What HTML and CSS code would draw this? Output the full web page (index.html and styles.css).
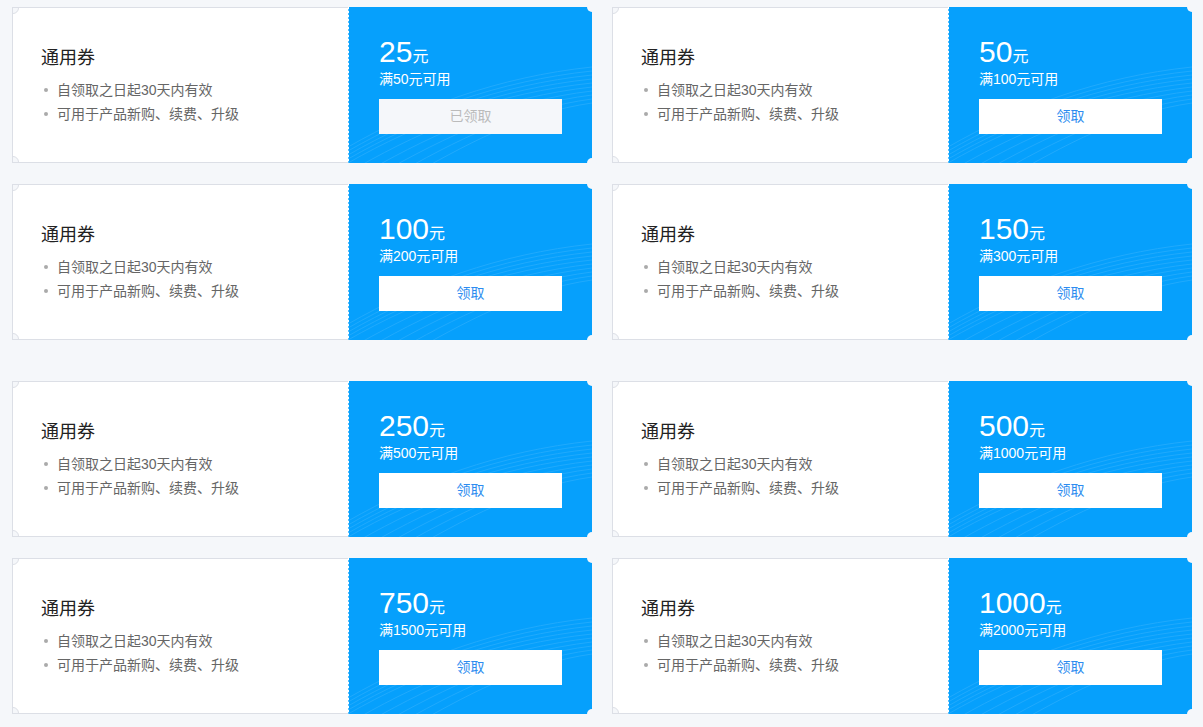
FILE: index.html
```html
<!DOCTYPE html>
<html lang="zh-CN">
<head>
    <meta charset="UTF-8">
    <meta name="viewport" content="width=device-width, initial-scale=1.0">
    <title>优惠券</title>
    <link rel="stylesheet" href="styles.css">
</head>
<body>
    <div class="page">
        <!-- 第一组 -->
        <div class="coupon-group">
            <div class="coupon">
                <div class="coupon-info">
                    <h3>通用券</h3>
                    <ul>
                        <li>自领取之日起30天内有效</li>
                        <li>可用于产品新购、续费、升级</li>
                    </ul>
                </div>
                <div class="coupon-value">
                    <svg class="waves" viewBox="0 0 244 156" preserveAspectRatio="none"><g fill="none" stroke="#fff"><path d="M0 140 C 70 100, 150 70, 244 60"/><path d="M0 144 C 70 104, 150 74, 244 64"/><path d="M0 148 C 70 108, 150 78, 244 68"/><path d="M0 152 C 70 112, 150 82, 244 72"/><path d="M0 156 C 70 116, 150 86, 244 76"/><path d="M10 160 C 80 120, 155 90, 244 80"/><path d="M20 164 C 90 124, 160 94, 244 84"/><path d="M30 168 C 100 128, 165 98, 244 88"/><path d="M40 172 C 110 132, 170 102, 244 92"/><path d="M50 176 C 120 136, 175 106, 244 96"/></g></svg>
                    <div class="amount">25<small>元</small></div>
                    <div class="limit">满50元可用</div>
                    <button class="btn disabled">已领取</button>
                </div>
            </div>
            <div class="coupon">
                <div class="coupon-info">
                    <h3>通用券</h3>
                    <ul>
                        <li>自领取之日起30天内有效</li>
                        <li>可用于产品新购、续费、升级</li>
                    </ul>
                </div>
                <div class="coupon-value">
                    <svg class="waves" viewBox="0 0 244 156" preserveAspectRatio="none"><g fill="none" stroke="#fff"><path d="M0 140 C 70 100, 150 70, 244 60"/><path d="M0 144 C 70 104, 150 74, 244 64"/><path d="M0 148 C 70 108, 150 78, 244 68"/><path d="M0 152 C 70 112, 150 82, 244 72"/><path d="M0 156 C 70 116, 150 86, 244 76"/><path d="M10 160 C 80 120, 155 90, 244 80"/><path d="M20 164 C 90 124, 160 94, 244 84"/><path d="M30 168 C 100 128, 165 98, 244 88"/><path d="M40 172 C 110 132, 170 102, 244 92"/><path d="M50 176 C 120 136, 175 106, 244 96"/></g></svg>
                    <div class="amount">50<small>元</small></div>
                    <div class="limit">满100元可用</div>
                    <button class="btn">领取</button>
                </div>
            </div>
            <div class="coupon">
                <div class="coupon-info">
                    <h3>通用券</h3>
                    <ul>
                        <li>自领取之日起30天内有效</li>
                        <li>可用于产品新购、续费、升级</li>
                    </ul>
                </div>
                <div class="coupon-value">
                    <svg class="waves" viewBox="0 0 244 156" preserveAspectRatio="none"><g fill="none" stroke="#fff"><path d="M0 140 C 70 100, 150 70, 244 60"/><path d="M0 144 C 70 104, 150 74, 244 64"/><path d="M0 148 C 70 108, 150 78, 244 68"/><path d="M0 152 C 70 112, 150 82, 244 72"/><path d="M0 156 C 70 116, 150 86, 244 76"/><path d="M10 160 C 80 120, 155 90, 244 80"/><path d="M20 164 C 90 124, 160 94, 244 84"/><path d="M30 168 C 100 128, 165 98, 244 88"/><path d="M40 172 C 110 132, 170 102, 244 92"/><path d="M50 176 C 120 136, 175 106, 244 96"/></g></svg>
                    <div class="amount">100<small>元</small></div>
                    <div class="limit">满200元可用</div>
                    <button class="btn">领取</button>
                </div>
            </div>
            <div class="coupon">
                <div class="coupon-info">
                    <h3>通用券</h3>
                    <ul>
                        <li>自领取之日起30天内有效</li>
                        <li>可用于产品新购、续费、升级</li>
                    </ul>
                </div>
                <div class="coupon-value">
                    <svg class="waves" viewBox="0 0 244 156" preserveAspectRatio="none"><g fill="none" stroke="#fff"><path d="M0 140 C 70 100, 150 70, 244 60"/><path d="M0 144 C 70 104, 150 74, 244 64"/><path d="M0 148 C 70 108, 150 78, 244 68"/><path d="M0 152 C 70 112, 150 82, 244 72"/><path d="M0 156 C 70 116, 150 86, 244 76"/><path d="M10 160 C 80 120, 155 90, 244 80"/><path d="M20 164 C 90 124, 160 94, 244 84"/><path d="M30 168 C 100 128, 165 98, 244 88"/><path d="M40 172 C 110 132, 170 102, 244 92"/><path d="M50 176 C 120 136, 175 106, 244 96"/></g></svg>
                    <div class="amount">150<small>元</small></div>
                    <div class="limit">满300元可用</div>
                    <button class="btn">领取</button>
                </div>
            </div>
        </div>

        <!-- 第二组 -->
        <div class="coupon-group">
            <div class="coupon">
                <div class="coupon-info">
                    <h3>通用券</h3>
                    <ul>
                        <li>自领取之日起30天内有效</li>
                        <li>可用于产品新购、续费、升级</li>
                    </ul>
                </div>
                <div class="coupon-value">
                    <svg class="waves" viewBox="0 0 244 156" preserveAspectRatio="none"><g fill="none" stroke="#fff"><path d="M0 140 C 70 100, 150 70, 244 60"/><path d="M0 144 C 70 104, 150 74, 244 64"/><path d="M0 148 C 70 108, 150 78, 244 68"/><path d="M0 152 C 70 112, 150 82, 244 72"/><path d="M0 156 C 70 116, 150 86, 244 76"/><path d="M10 160 C 80 120, 155 90, 244 80"/><path d="M20 164 C 90 124, 160 94, 244 84"/><path d="M30 168 C 100 128, 165 98, 244 88"/><path d="M40 172 C 110 132, 170 102, 244 92"/><path d="M50 176 C 120 136, 175 106, 244 96"/></g></svg>
                    <div class="amount">250<small>元</small></div>
                    <div class="limit">满500元可用</div>
                    <button class="btn">领取</button>
                </div>
            </div>
            <div class="coupon">
                <div class="coupon-info">
                    <h3>通用券</h3>
                    <ul>
                        <li>自领取之日起30天内有效</li>
                        <li>可用于产品新购、续费、升级</li>
                    </ul>
                </div>
                <div class="coupon-value">
                    <svg class="waves" viewBox="0 0 244 156" preserveAspectRatio="none"><g fill="none" stroke="#fff"><path d="M0 140 C 70 100, 150 70, 244 60"/><path d="M0 144 C 70 104, 150 74, 244 64"/><path d="M0 148 C 70 108, 150 78, 244 68"/><path d="M0 152 C 70 112, 150 82, 244 72"/><path d="M0 156 C 70 116, 150 86, 244 76"/><path d="M10 160 C 80 120, 155 90, 244 80"/><path d="M20 164 C 90 124, 160 94, 244 84"/><path d="M30 168 C 100 128, 165 98, 244 88"/><path d="M40 172 C 110 132, 170 102, 244 92"/><path d="M50 176 C 120 136, 175 106, 244 96"/></g></svg>
                    <div class="amount">500<small>元</small></div>
                    <div class="limit">满1000元可用</div>
                    <button class="btn">领取</button>
                </div>
            </div>
            <div class="coupon">
                <div class="coupon-info">
                    <h3>通用券</h3>
                    <ul>
                        <li>自领取之日起30天内有效</li>
                        <li>可用于产品新购、续费、升级</li>
                    </ul>
                </div>
                <div class="coupon-value">
                    <svg class="waves" viewBox="0 0 244 156" preserveAspectRatio="none"><g fill="none" stroke="#fff"><path d="M0 140 C 70 100, 150 70, 244 60"/><path d="M0 144 C 70 104, 150 74, 244 64"/><path d="M0 148 C 70 108, 150 78, 244 68"/><path d="M0 152 C 70 112, 150 82, 244 72"/><path d="M0 156 C 70 116, 150 86, 244 76"/><path d="M10 160 C 80 120, 155 90, 244 80"/><path d="M20 164 C 90 124, 160 94, 244 84"/><path d="M30 168 C 100 128, 165 98, 244 88"/><path d="M40 172 C 110 132, 170 102, 244 92"/><path d="M50 176 C 120 136, 175 106, 244 96"/></g></svg>
                    <div class="amount">750<small>元</small></div>
                    <div class="limit">满1500元可用</div>
                    <button class="btn">领取</button>
                </div>
            </div>
            <div class="coupon">
                <div class="coupon-info">
                    <h3>通用券</h3>
                    <ul>
                        <li>自领取之日起30天内有效</li>
                        <li>可用于产品新购、续费、升级</li>
                    </ul>
                </div>
                <div class="coupon-value">
                    <svg class="waves" viewBox="0 0 244 156" preserveAspectRatio="none"><g fill="none" stroke="#fff"><path d="M0 140 C 70 100, 150 70, 244 60"/><path d="M0 144 C 70 104, 150 74, 244 64"/><path d="M0 148 C 70 108, 150 78, 244 68"/><path d="M0 152 C 70 112, 150 82, 244 72"/><path d="M0 156 C 70 116, 150 86, 244 76"/><path d="M10 160 C 80 120, 155 90, 244 80"/><path d="M20 164 C 90 124, 160 94, 244 84"/><path d="M30 168 C 100 128, 165 98, 244 88"/><path d="M40 172 C 110 132, 170 102, 244 92"/><path d="M50 176 C 120 136, 175 106, 244 96"/></g></svg>
                    <div class="amount">1000<small>元</small></div>
                    <div class="limit">满2000元可用</div>
                    <button class="btn">领取</button>
                </div>
            </div>
        </div>
    </div>
</body>
</html>
```

FILE: styles.css
```css
body {
    margin: 0;
    padding: 0;
    background-color: #f5f7fa;
    font-family: 'Liberation Sans', 'Noto Sans CJK SC', sans-serif;
    color: #333;
}
.page {
    padding: 7px 11px 0 12px;
    display: flex;
    flex-direction: column;
    gap: 41px;
}
.coupon-group {
    display: grid;
    grid-template-columns: 580px 580px;
    column-gap: 20px;
    row-gap: 21px;
}
.coupon {
    position: relative;
    display: flex;
    height: 156px;
}
/* 右侧缺口 */
.coupon::before,
.coupon::after {
    content: '';
    position: absolute;
    right: -5px;
    width: 10px;
    height: 10px;
    border-radius: 50%;
    background-color: #f5f7fa;
    z-index: 2;
}
.coupon::before {
    top: -5px;
}
.coupon::after {
    bottom: -5px;
}
.coupon-info {
    position: relative;
    overflow: hidden;
    box-sizing: border-box;
    width: 336px;
    padding: 38px 0 0 28px;
    background-color: #fff;
    border: 1px solid #dcdfe6;
    border-right: none;
}
/* 左侧缺口 */
.coupon-info::before,
.coupon-info::after {
    content: '';
    position: absolute;
    left: -6px;
    width: 10px;
    height: 10px;
    border-radius: 50%;
    border: 1px solid #dcdfe6;
    background-color: #f5f7fa;
}
.coupon-info::before {
    top: -6px;
}
.coupon-info::after {
    bottom: -6px;
}
.coupon-info h3 {
    margin: 0;
    font-size: 18px;
    font-weight: normal;
    line-height: 24px;
    color: #222;
}
.coupon-info ul {
    list-style: none;
    margin: 8px 0 0;
    padding: 0;
}
.coupon-info li {
    position: relative;
    padding-left: 16px;
    font-size: 14px;
    line-height: 24px;
    color: #666;
}
.coupon-info li::before {
    content: '';
    position: absolute;
    left: 3px;
    top: 10px;
    width: 4px;
    height: 4px;
    border-radius: 50%;
    background-color: #aaa;
}
.coupon-value {
    position: relative;
    overflow: hidden;
    box-sizing: border-box;
    width: 244px;
    padding: 28px 0 0 31px;
    background-color: #06a0fc;
    color: #fff;
}
/* 虚线分割 */
.coupon-value::before {
    content: '';
    position: absolute;
    left: 0;
    top: 0;
    bottom: 0;
    width: 1px;
    background-image: repeating-linear-gradient(to bottom, #fff 0, #fff 2px, rgba(255, 255, 255, 0.3) 2px, rgba(255, 255, 255, 0.3) 4px);
}
.waves {
    position: absolute;
    left: 0;
    top: 0;
    width: 100%;
    height: 100%;
    opacity: 0.1;
    stroke-width: 1;
}
.amount {
    position: relative;
    height: 34px;
    font-size: 30px;
    line-height: 34px;
}
.amount small {
    font-size: 16px;
    line-height: 1;
}
.limit {
    position: relative;
    height: 20px;
    font-size: 14px;
    line-height: 20px;
}
.btn {
    position: relative;
    display: block;
    box-sizing: border-box;
    width: 183px;
    height: 35px;
    margin-top: 10px;
    padding: 0 0 3px;
    border: none;
    background-color: #fff;
    color: #2d8cf0;
    font-family: inherit;
    font-size: 14px;
    cursor: pointer;
}
.btn.disabled {
    background-color: #f5f7fa;
    color: #bbb;
    cursor: not-allowed;
}
```
